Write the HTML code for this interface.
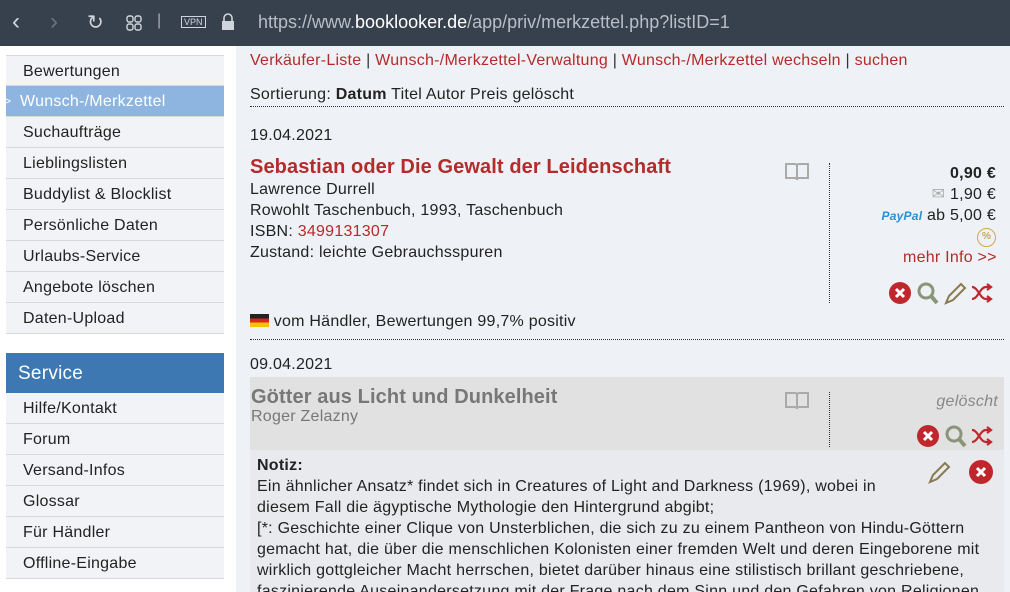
<!DOCTYPE html>
<html><head><meta charset="utf-8"><style>
*{margin:0;padding:0;box-sizing:border-box}
html,body{width:1010px;height:592px;overflow:hidden}
body{background:#eef1f5;font-family:"Liberation Sans",sans-serif;font-size:16px;letter-spacing:.25px;color:#222;position:relative}
.a{position:absolute;white-space:nowrap}
.bar{position:absolute;left:0;top:0;width:1010px;height:46px;background:#36414d;color:#d8dde3;letter-spacing:0}
.side{position:absolute;left:0;top:46px;width:236px;height:546px;background:#fff}
.mi{position:absolute;left:6px;width:218px;height:31px;background:#f1f3f6;border-bottom:1px solid #d8d8d8;padding:7px 0 0 17px;font-size:16px;color:#222}
.red{color:#b52a2a}
.dot{position:absolute;border-top:1px dotted #333}
</style></head><body>
<div class="bar">
<span class="a" style="left:12px;top:8px;font-size:24px;color:#cfd5db">&#8249;</span>
<span class="a" style="left:50px;top:8px;font-size:24px;color:#6b7580">&#8250;</span>
<span class="a" style="left:87px;top:10px;font-size:20px;color:#cfd5db">&#8635;</span>
<svg class="a" style="left:126px;top:15px" width="16" height="16"><g fill="none" stroke="#cfd5db" stroke-width="1.4"><rect x="1" y="1" width="6" height="6" rx="2"/><rect x="9" y="1" width="6" height="6" rx="2"/><rect x="1" y="9" width="6" height="6" rx="2"/><rect x="9" y="9" width="6" height="6" rx="2"/></g></svg>
<span class="a" style="left:157px;top:12px;font-size:16px;color:#aab">|</span>
<span class="a" style="left:181px;top:16px;font-size:9px;border:1px solid #cfd5db;padding:0 2px;color:#cfd5db">VPN</span>
<svg class="a" style="left:221px;top:13px" width="14" height="18"><path d="M3 8V5a4 4 0 0 1 8 0v3" fill="none" stroke="#cfd5db" stroke-width="1.6"/><rect x="1" y="8" width="12" height="9" fill="#cfd5db"/></svg>
<span class="a" style="left:258px;top:12px;font-size:18px;color:#b7bec6">https://www.<b style="color:#fff;font-weight:normal">booklooker.de</b>/app/priv/merkzettel.php?listID=1</span>
</div>
<div class="side">
<div class="mi" style="top:9px;border-top:1px solid #d8d8d8">Bewertungen</div>
<div class="mi" style="top:40px;background:#8db5e0;color:#fff;padding-left:14px"><span style="position:absolute;left:-2px;font-size:12px;top:8px">&gt;</span>Wunsch-/Merkzettel</div>
<div class="mi" style="top:71px">Suchaufträge</div>
<div class="mi" style="top:102px">Lieblingslisten</div>
<div class="mi" style="top:133px">Buddylist &amp; Blocklist</div>
<div class="mi" style="top:164px">Persönliche Daten</div>
<div class="mi" style="top:195px">Urlaubs-Service</div>
<div class="mi" style="top:226px">Angebote löschen</div>
<div class="mi" style="top:257px">Daten-Upload</div>
<div class="mi" style="top:307px;height:40px;background:#3d78b3;color:#fff;font-size:19px;padding:10px 0 0 12px;border:0">Service</div>
<div class="mi" style="top:347px">Hilfe/Kontakt</div>
<div class="mi" style="top:378px">Forum</div>
<div class="mi" style="top:409px">Versand-Infos</div>
<div class="mi" style="top:440px">Glossar</div>
<div class="mi" style="top:471px">Für Händler</div>
<div class="mi" style="top:502px">Offline-Eingabe</div>
</div>

<span class="a red" style="left:250px;top:52px">Verkäufer-Liste <span style="color:#333">|</span> Wunsch-/Merkzettel-Verwaltung <span style="color:#333">|</span> Wunsch-/Merkzettel wechseln <span style="color:#333">|</span> suchen</span>
<span class="a" style="left:250px;top:86px">Sortierung: <b>Datum</b> Titel Autor Preis gelöscht</span>
<div class="dot" style="left:250px;top:106px;width:754px"></div>
<span class="a" style="left:250px;top:127px">19.04.2021</span>
<span class="a red" style="left:250px;top:156px;font-size:20px;font-weight:bold;letter-spacing:.1px">Sebastian oder Die Gewalt der Leidenschaft</span>
<div class="a" style="left:250px;top:179px;line-height:21px">Lawrence Durrell<br>Rowohlt Taschenbuch, 1993, Taschenbuch<br>ISBN: <span class="red">3499131307</span><br>Zustand: leichte Gebrauchsspuren</div>
<svg class="a" style="left:784px;top:161px" width="26" height="20"><path d="M2 3h9q2 0 2 2q0-2 2-2h9v14h-9q-2 0-2 2q0-2-2-2H2zM13 5v14" fill="none" stroke="#aaa" stroke-width="2"/></svg>
<div style="position:absolute;left:829px;top:163px;height:140px;border-left:1px dotted #333"></div>
<div class="a" style="right:14px;top:163px;text-align:right;line-height:21px"><b>0,90 €</b><br><span style="color:#aaa;font-size:16px">&#9993;</span> 1,90 €<br><i style="color:#2790d6;font-weight:bold;font-size:12px">PayPal</i> ab 5,00 €</div>
<span class="a" style="left:977px;top:228px;width:19px;height:19px;border:1.5px solid #cfa84a;border-radius:50%;font-size:10px;letter-spacing:0;color:#b08a30;text-align:center;line-height:16px">%</span>
<span class="a red" style="left:903px;top:249px">mehr Info &gt;&gt;</span>
<div class="a" style="left:888px;top:281px">
<svg width="112" height="26"><circle cx="12" cy="12" r="11" fill="#c0272d"/><path d="M8 8l8 8M16 8l-8 8" stroke="#fff" stroke-width="3"/><circle cx="38" cy="10" r="7" fill="none" stroke="#8a9478" stroke-width="3"/><path d="M43 15l6 7" stroke="#8a9478" stroke-width="4"/><path d="M58 22l3-7 12-12 4 4-12 12z" fill="none" stroke="#8a7a50" stroke-width="2"/><path d="M84 18c6 0 8-12 14-12h4M84 6c6 0 8 12 14 12h4M99 3l4 3-4 3M99 15l4 3-4 3" fill="none" stroke="#c0272d" stroke-width="2.2"/></svg></div>
<span class="a" style="left:250px;top:313px"><span style="display:inline-block;width:19px;height:13px;vertical-align:-1px;background:linear-gradient(#222 33%,#d22 33% 66%,#f5c400 66%)"></span> vom Händler, Bewertungen 99,7% positiv</span>
<div class="dot" style="left:250px;top:339px;width:754px"></div>
<span class="a" style="left:250px;top:356px">09.04.2021</span>
<div style="position:absolute;left:250px;top:377px;width:754px;height:73px;background:#e1e1e1"></div>
<div style="position:absolute;left:250px;top:450px;width:754px;height:142px;background:#e8eaed"></div>
<span class="a" style="left:251px;top:386px;font-size:20px;font-weight:bold;letter-spacing:.1px;color:#777">Götter aus Licht und Dunkelheit</span>
<span class="a" style="left:251px;top:408px;color:#777">Roger Zelazny</span>
<svg class="a" style="left:784px;top:390px" width="26" height="20"><path d="M2 3h9q2 0 2 2q0-2 2-2h9v14h-9q-2 0-2 2q0-2-2-2H2zM13 5v14" fill="none" stroke="#aaa" stroke-width="2"/></svg>
<div style="position:absolute;left:829px;top:392px;height:55px;border-left:1px dotted #333"></div>
<i class="a" style="right:12px;top:393px;color:#888">gelöscht</i>
<div class="a" style="left:916px;top:424px"><svg width="84" height="26"><circle cx="12" cy="12" r="11" fill="#c0272d"/><path d="M8 8l8 8M16 8l-8 8" stroke="#fff" stroke-width="3"/><circle cx="38" cy="10" r="7" fill="none" stroke="#8a9478" stroke-width="3"/><path d="M43 15l6 7" stroke="#8a9478" stroke-width="4"/><path d="M56 18c6 0 8-12 14-12h4M56 6c6 0 8 12 14 12h4M71 3l4 3-4 3M71 15l4 3-4 3" fill="none" stroke="#c0272d" stroke-width="2.2"/></svg></div>
<div class="a" style="left:927px;top:458px"><svg width="70" height="28"><path d="M3 24l3-7 12-12 4 4-12 12z" fill="none" stroke="#8a7a50" stroke-width="2"/><circle cx="54" cy="14" r="12" fill="#c0272d"/><path d="M50 10l8 8M58 10l-8 8" stroke="#fff" stroke-width="3"/></svg></div>
<div class="a" style="left:257px;top:455px;line-height:21px"><b>Notiz:</b><br>Ein ähnlicher Ansatz* findet sich in Creatures of Light and Darkness (1969), wobei in<br>diesem Fall die ägyptische Mythologie den Hintergrund abgibt;<br>[*: Geschichte einer Clique von Unsterblichen, die sich zu zu einem Pantheon von Hindu-Göttern<br>gemacht hat, die über die menschlichen Kolonisten einer fremden Welt und deren Eingeborene mit<br>wirklich gottgleicher Macht herrschen, bietet darüber hinaus eine stilistisch brillant geschriebene,<br>faszinierende Auseinandersetzung mit der Frage nach dem Sinn und den Gefahren von Religionen</div>
</body></html>
